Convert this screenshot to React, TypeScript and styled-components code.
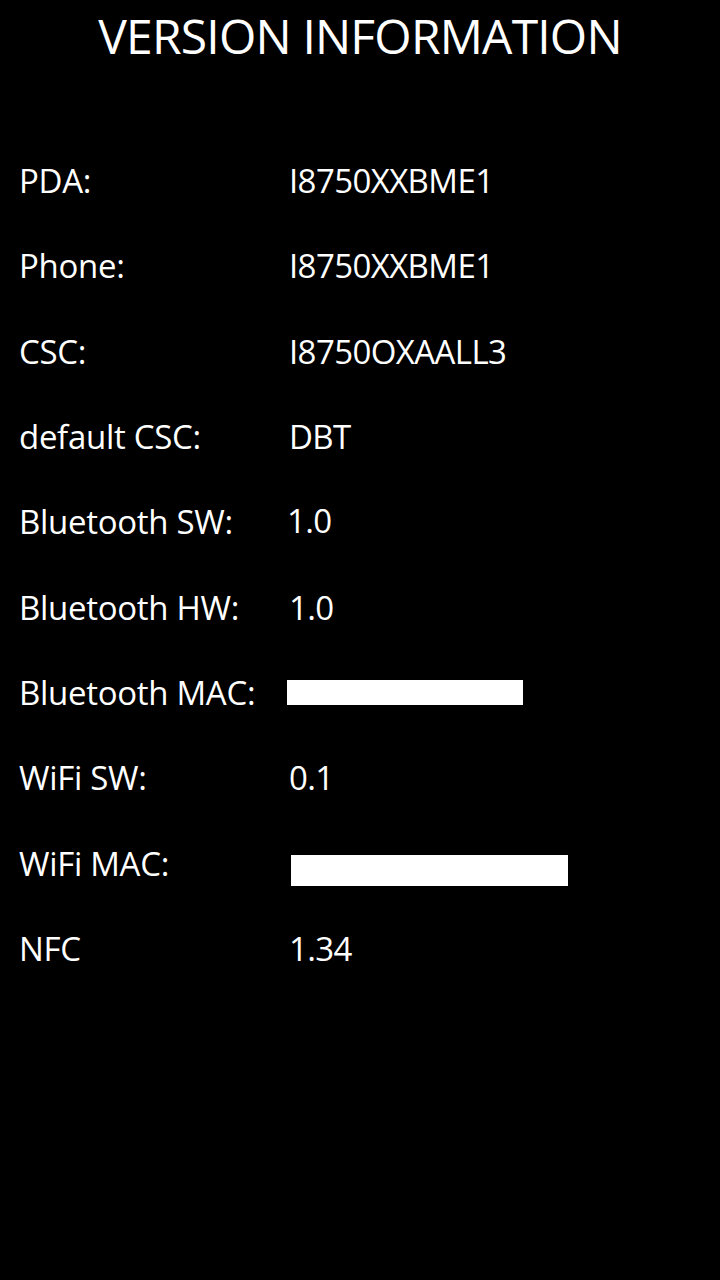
import React from "react";
import styled, { createGlobalStyle } from "styled-components";

const GlobalStyle = createGlobalStyle`
  html, body {
    margin: 0;
    padding: 0;
    background: #000;
  }
  body {
    font-family: "Open Sans", "Noto Sans", sans-serif;
    color: #fff;
  }
`;

const Screen = styled.div`
  width: 720px;
  height: 1280px;
  background: #000;
  display: flex;
  flex-direction: column;
`;

const Title = styled.h1`
  margin: 0;
  padding-top: 12px;
  font-size: 48px;
  font-weight: 400;
  line-height: 48px;
  text-align: center;
  letter-spacing: -0.8px;
`;

const InfoList = styled.div`
  margin-top: 78px;
  display: flex;
  flex-direction: column;
`;

const InfoRow = styled.div`
  display: grid;
  grid-template-columns: 270px 1fr;
  align-items: center;
  height: 85.33px;
  padding-left: 19px;
`;

const Label = styled.span`
  font-size: 33px;
  line-height: 1;
  letter-spacing: -0.3px;
`;

const Value = styled.span<{ $dx?: number; $dy?: number }>`
  font-size: 33px;
  line-height: 1;
  letter-spacing: -0.6px;
  margin-left: ${(p) => p.$dx ?? 0}px;
  transform: translateY(${(p) => p.$dy ?? 0}px);
`;

// MAC addresses are blanked out with a white block in the screenshot
const Redacted = styled.div<{ $w: number; $h: number; $dx?: number; $dy?: number }>`
  width: ${(p) => p.$w}px;
  height: ${(p) => p.$h}px;
  background: #fff;
  margin-left: ${(p) => p.$dx ?? 0}px;
  transform: translateY(${(p) => p.$dy ?? 0}px);
`;

type Row = {
  label: string;
  value?: string;
  dx?: number;
  dy?: number;
  bar?: { w: number; h: number };
};

const rows: Row[] = [
  { label: "PDA:", value: "I8750XXBME1" },
  { label: "Phone:", value: "I8750XXBME1" },
  { label: "CSC:", value: "I8750OXAALL3" },
  { label: "default CSC:", value: "DBT" },
  { label: "Bluetooth SW:", value: "1.0", dx: -2, dy: -1 },
  { label: "Bluetooth HW:", value: "1.0" },
  { label: "Bluetooth MAC:", bar: { w: 236, h: 25 }, dx: -2, dy: 0 },
  { label: "WiFi SW:", value: "0.1" },
  { label: "WiFi MAC:", bar: { w: 277, h: 31 }, dx: 2, dy: 7 },
  { label: "NFC", value: "1.34" },
];

function App() {
  return (
    <Screen>
      <GlobalStyle />
      <Title>VERSION INFORMATION</Title>
      <InfoList>
        {rows.map((r) => (
          <InfoRow key={r.label}>
            <Label>{r.label}</Label>
            {r.bar ? (
              <Redacted $w={r.bar.w} $h={r.bar.h} $dx={r.dx} $dy={r.dy} />
            ) : (
              <Value $dx={r.dx} $dy={r.dy}>{r.value}</Value>
            )}
          </InfoRow>
        ))}
      </InfoList>
    </Screen>
  );
}

export default App;
